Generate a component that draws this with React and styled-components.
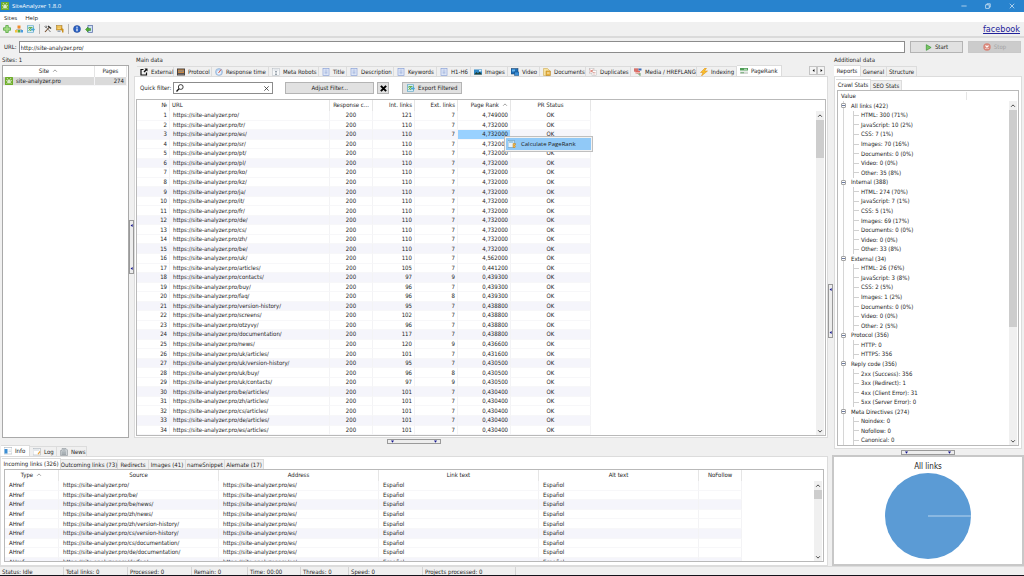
import React from "react";
import styled, { createGlobalStyle, css } from "styled-components";

const Global = createGlobalStyle`
  * { box-sizing: border-box; }
  html, body { margin: 0; }
  body, button, input {
    font: 6px/8px "DejaVu Sans Condensed", "DejaVu Sans", Tahoma, sans-serif;
    color: #1c1c1c;
  }
  button { padding: 0; margin: 0; border: 0; background: none; white-space: nowrap; }
  svg { display: block; flex: none; }
`;

/* ---------- icons ---------- */

const art = {
  logo: (
    <>
      <rect width="16" height="16" rx="1" fill="#6fae2b" />
      <path d="M4 2l2 3M12 2l-2 3M2 7l3 1M14 7l-3 1M3 13l3-2M13 13l-3-2" stroke="#fff" strokeWidth="1.3" />
      <ellipse cx="8" cy="9" rx="3" ry="4" fill="#fff" />
      <path d="M8 5v8" stroke="#6fae2b" />
    </>
  ),
  plus: <path d="M5.5 1h5v4.500h4.500v5h-4.500v4.500h-5v-4.500h-4.500v-5h4.500z" fill="#a6dc86" stroke="#4fa43a" strokeWidth="1.500" />,
  blocks: (
    <>
      <path d="M8 6v3M3 11V9h10v2" stroke="#888" fill="none" />
      <rect x="5" y="1" width="6" height="6" fill="#f08a2a" />
      <rect x="0" y="10" width="5" height="5" fill="#f5c13c" />
      <rect x="5.500" y="10" width="5" height="5" fill="#5aaf3e" />
      <rect x="11" y="10" width="5" height="5" fill="#4c9be0" />
    </>
  ),
  exportSheet: (
    <>
      <rect x="1" y="1.500" width="12" height="13" fill="#e8f5fb" stroke="#5ba7c9" strokeWidth="1.500" />
      <path d="M3 5h8M3 12l5-6M3 6l5 6" stroke="#57a83c" strokeWidth="1.800" />
      <path d="M8 7h4V5l4 4-4 4v-2H8z" fill="#4aa6cf" />
    </>
  ),
  tools: (
    <>
      <path d="M2 14L11 4" stroke="#7a4f2c" strokeWidth="2.200" />
      <path d="M8 2l6 5" stroke="#333" strokeWidth="3" />
      <path d="M3 3l10 11" stroke="#777" strokeWidth="2" />
      <path d="M1 3l2 2 2-2-1-2" stroke="#555" fill="none" strokeWidth="1.500" />
    </>
  ),
  serverKey: (
    <>
      <rect x="1" y="1" width="11" height="9" fill="#e9b33b" stroke="#9a7224" />
      <path d="M3 4h7M3 7h7" stroke="#fff2c0" />
      <path d="M8 9l3-3 4 2v7h-3v-4z" fill="#c98f1d" />
      <rect x="3" y="11" width="6" height="3" fill="#9aa6b5" />
    </>
  ),
  info: (
    <>
      <circle cx="8" cy="8" r="7" fill="#2b62c4" stroke="#183f8a" />
      <circle cx="8" cy="4.500" r="1.400" fill="#fff" />
      <rect x="6.800" y="7" width="2.400" height="5.500" fill="#fff" />
    </>
  ),
  exit: (
    <>
      <rect x="6" y="1" width="9" height="14" fill="#cfe0f5" stroke="#5b6fa8" strokeWidth="1.500" />
      <path d="M1 9l5-5v3h5v4H6v3z" fill="#4fae35" stroke="#2f7d1c" />
    </>
  ),
  play: <path d="M3 1.500L14 8 3 14.500z" fill="#7cc462" stroke="#2f9430" strokeWidth="1.500" />,
  stop: (
    <>
      <circle cx="8" cy="8" r="7.500" fill="#d9877a" />
      <path d="M5 5l6 6M11 5l-6 6" stroke="#fff" strokeWidth="2.200" />
    </>
  ),
  external: (
    <>
      <path d="M7 3H2v11h11V9" fill="none" stroke="#111" strokeWidth="2.400" />
      <path d="M9 1h6v6l-2-2-4 4-2-2 4-4z" fill="#111" />
    </>
  ),
  protocol: (
    <>
      <rect x="0" y="1" width="16" height="14" fill="#4b433f" />
      <rect x="2" y="3" width="12" height="7" fill="#c98944" />
      <path d="M3 8l3-3 3 3 4-4" stroke="#5b83b8" strokeWidth="1.500" fill="none" />
      <path d="M2 12.500h12" stroke="#8f9399" strokeWidth="1.500" />
    </>
  ),
  gauge: (
    <>
      <circle cx="8" cy="8" r="7" fill="#b9d4f2" stroke="#7f9fc6" />
      <circle cx="8" cy="9" r="4" fill="#eef5fc" />
      <path d="M7 10l5-7" stroke="#d24a3c" strokeWidth="1.800" />
    </>
  ),
  robots: (
    <>
      <rect x="1" y="1" width="14" height="14" fill="#f6f8fa" stroke="#b3bac2" />
      <path d="M3 4h10" stroke="#b3bac2" />
      <path d="M6 7h4M8 7v6M6 13h4" stroke="#73808c" strokeWidth="1.300" />
    </>
  ),
  page: (
    <>
      <rect x="2" y="1" width="12" height="14" fill="#e6edfb" stroke="#8aa2d6" strokeWidth="1.400" />
      <path d="M5 4h6M5 6.500h6M5 9h6M5 11.500h6" stroke="#7f97cd" />
    </>
  ),
  images: (
    <>
      <rect x="0" y="3" width="16" height="10" fill="#2f86c4" />
      <path d="M0 13l5-5 3 3 3-4 5 6z" fill="#1f3f33" />
      <rect x="10" y="4" width="5" height="3" fill="#d8eefb" />
    </>
  ),
  video: (
    <>
      <rect x="0" y="1" width="14" height="11" fill="#1e6fb9" stroke="#173d63" />
      <path d="M2 3h6v4H2z" fill="#69b4ea" />
      <rect x="7" y="8" width="9" height="7" fill="#3d8fd6" stroke="#164a7c" />
    </>
  ),
  docs: (
    <>
      <path d="M1 1h8l4 4v10H1z" fill="#f7e3a1" stroke="#c79c3a" />
      <path d="M6 6h9v9H6z" fill="#e9b23c" stroke="#b0802a" />
      <path d="M8 10h5" stroke="#fff" strokeWidth="1.500" />
    </>
  ),
  duplicates: (
    <>
      <rect x="1" y="1" width="9" height="10" fill="#fff" stroke="#b7b7b7" />
      <rect x="6" y="5" width="9" height="10" fill="#fff" stroke="#b7b7b7" />
      <path d="M2 3l6 6M8 3L2 9" stroke="#d9503f" strokeWidth="1.500" />
      <path d="M8 9h5M8 12h5" stroke="#c07a70" />
    </>
  ),
  media: (
    <>
      <rect x="0" y="1" width="9" height="6" fill="#c8443c" />
      <rect x="9" y="1" width="6" height="4" fill="#3d6bb3" />
      <rect x="3" y="6" width="9" height="5" fill="#e0685e" />
      <path d="M0 4h9M3 9h9" stroke="#fff" />
      <path d="M8 11l4 4M12 10v5" stroke="#3d8a48" strokeWidth="1.500" />
    </>
  ),
  bolt: <path d="M10 0L1 9h5l-3 7L15 6H9l4-6z" fill="#fbc02d" stroke="#d98a12" />,
  rank: (
    <>
      <rect x="0" y="2" width="16" height="5" fill="#4f9d57" />
      <path d="M8 4.500h6" stroke="#e8f6e8" strokeWidth="1.500" />
      <rect x="0" y="9" width="16" height="5" fill="#d4d9d4" />
      <path d="M1 11.500h7" stroke="#4f9d57" strokeWidth="1.500" />
    </>
  ),
  search: (
    <>
      <circle cx="9.500" cy="6" r="4.800" fill="none" stroke="#111" strokeWidth="1.600" />
      <path d="M6 9.500L1 15" stroke="#111" strokeWidth="2.400" />
    </>
  ),
  close: <path d="M3 3l10 10M13 3L3 13" stroke="#333" strokeWidth="1.800" />,
  closeBold: <path d="M2 2l12 12M14 2L2 14" stroke="#000" strokeWidth="4.500" />,
  sort: <path d="M3 10l5-5 5 5" fill="none" stroke="#555" strokeWidth="1.500" />,
  up: <path d="M3 10l5-5 5 5" fill="none" stroke="#444" strokeWidth="2.600" />,
  down: <path d="M3 6l5 5 5-5" fill="none" stroke="#444" strokeWidth="2.600" />,
  left: <path d="M11 3L5 8l6 5z" fill="#111" />,
  right: <path d="M5 3l6 5-6 5z" fill="#111" />,
  gripDown: <path d="M0 3h16L8 14z" fill="#14148c" />,
  gripLeft: <path d="M14 0v16L3 8z" fill="#14148c" />,
  infoTab: (
    <>
      <rect x="0" y="1" width="16" height="13" fill="#fff" stroke="#9aa4ae" />
      <rect x="1" y="4" width="6" height="9" fill="#3b8ed4" />
      <path d="M9 6h5M9 9h5" stroke="#b9c6d2" />
    </>
  ),
  logTab: (
    <>
      <rect x="0" y="1" width="15" height="13" fill="#fff" stroke="#9aa4ae" />
      <path d="M2 4h11" stroke="#b8c3cc" strokeWidth="1.500" />
      <path d="M9 12l4-6 2 2-4 5z" fill="#e9a23b" />
    </>
  ),
  newsTab: (
    <>
      <path d="M4 1h8l3 3v11H1V5h3z" fill="#cfd4d8" stroke="#7e868d" />
      <path d="M3 8h9M3 10.500h9M3 13h9M6 4h5" stroke="#7e868d" strokeWidth="1.200" />
    </>
  ),
  calc: (
    <>
      <rect x="0" y="1" width="13" height="14" fill="#eaf4fb" stroke="#6d9fc0" strokeWidth="1.300" />
      <path d="M2 4h9" stroke="#5aa3d0" strokeWidth="2" />
      <path d="M10 7h5v3l-2 1 2 2-1 2h-4z" fill="#f0b64c" stroke="#bd8426" />
    </>
  ),
  min: <path d="M1 8h14" stroke="#fff" strokeWidth="1.600" />,
  restore: (
    <>
      <rect x="2" y="5" width="9" height="9" fill="none" stroke="#fff" strokeWidth="1.600" />
      <path d="M5 5V2h9v9h-3" fill="none" stroke="#fff" strokeWidth="1.600" />
    </>
  ),
  shut: <path d="M2 2l12 12M14 2L2 14" stroke="#fff" strokeWidth="1.600" />,
};

const Icon = ({ name, size = 8 }) => (
  <svg width={size} height={size} viewBox="0 0 16 16" fill="none" aria-hidden="true">{art[name]}</svg>
);

/* ---------- window frame ---------- */

const Window = styled.div`
  min-height: 100vh;
  display: flex;
  flex-direction: column;
  background: #f0f0f0;
  border-bottom: 1px solid #14121a;
  overflow: hidden;
`;

const TitleBar = styled.header`
  display: flex;
  align-items: center;
  gap: 3px;
  height: 12px;
  padding-left: 1px;
  background: #2883ce;
  color: #fff;
  font-family: "Open Sans", sans-serif;
`;

const Title = styled.span`
  flex: 1;
`;

const WindowButtonGroup = styled.div`
  display: flex;
`;

const WindowButton = styled.button`
  width: 24px;
  height: 12px;
  display: grid;
  place-items: center;
`;

const MenuBar = styled.nav`
  display: flex;
  align-items: flex-end;
  gap: 8px;
  height: 10px;
  padding: 0 4px;
  background: #fff;
  button { font: 6px/8px "Open Sans", sans-serif; }
`;

const ToolBar = styled.div`
  display: flex;
  align-items: center;
  gap: 4px;
  height: 16px;
  padding: 0 4px 0 3px;
  border-bottom: 2px solid #dadada;
`;

const Divider = styled.i`
  width: 1px;
  height: 10px;
  background: #b5b5b5;
`;

const FbLink = styled.a`
  margin-left: auto;
  font-size: 9px;
  line-height: 12px;
  color: #22229a;
`;

const UrlBar = styled.form`
  display: flex;
  align-items: center;
  gap: 5px;
  height: 17px;
  padding: 1px 3px 0 4px;
`;

const UrlField = styled.label`
  flex: 1;
  display: flex;
  align-items: center;
  gap: 2px;
`;

const TextInput = styled.input`
  flex: 1;
  min-width: 0;
  height: 12px;
  padding: 0 1px;
  border: 1px solid #8c8c8c;
  background: #fff;
  outline: 0;
`;

const PushButton = styled.button`
  display: flex;
  align-items: center;
  justify-content: center;
  gap: 3px;
  width: ${(p) => p.$w}px;
  height: 12px;
  border: 1px solid ${(p) => (p.disabled ? "#c9c9c9" : "#b4b4b4")};
  background: ${(p) => (p.disabled ? "#cccccc" : "#e1e1e1")};
  color: ${(p) => (p.disabled ? "#a3a3a3" : "#1c1c1c")};
`;

/* ---------- panes ---------- */

const Workspace = styled.main`
  flex: 1;
  display: flex;
`;

const Column = styled.div`
  display: flex;
  flex-direction: column;
  min-width: 0;
  ${(p) => (p.$w ? `width: ${p.$w}px; flex: none;` : "flex: 1;")}
`;

const TopPanes = styled.div`
  flex: 1;
  display: flex;
`;

const PaneLabel = styled.div`
  height: 10px;
  padding: 1px 2px 0;
`;

const SitesBox = styled.div`
  flex: 1;
  margin-left: 2px;
  border: 1px solid #a9a9a9;
  background: #fff;
`;

const VSplit = styled.div`
  width: ${(p) => p.$w}px;
  flex: none;
  display: flex;
  align-items: center;
  justify-content: center;
`;

const HSplit = styled.div`
  height: ${(p) => p.$h}px;
  flex: none;
  display: flex;
  align-items: center;
  justify-content: center;
`;

const Grip = styled.div`
  flex: none;
  display: flex;
  align-items: center;
  justify-content: space-between;
  border: 1px solid #9a9a9a;
  background: #ededed;
  ${(p) =>
    p.$vertical
      ? css`flex-direction: column; width: 5px; height: 54px; padding: 3px 0;`
      : css`width: 54px; height: 5px; padding: 0 3px;`}
`;

const VGrip = () => (
  <Grip $vertical><Icon name="gripLeft" size={3} /><Icon name="gripLeft" size={3} /></Grip>
);
const HGrip = () => (
  <Grip><Icon name="gripDown" size={3} /><Icon name="gripDown" size={3} /></Grip>
);

const TabStrip = styled.div`
  display: flex;
  align-items: flex-end;
  height: ${(p) => p.$h || 11}px;
  padding: 0 ${(p) => p.$pad || 0}px;
`;

const TabButton = styled.button`
  display: flex;
  align-items: center;
  gap: 3px;
  flex: none;
  height: 10px;
  width: ${(p) => p.$w}px;
  padding: 0 3px;
  border: 1px solid #dcdcdc;
  border-width: 1px 1px 0 0;
  background: #f0f0f0;
  ${(p) => !p.$icon && css`justify-content: center; padding: 0;`}
  ${(p) =>
    p.$active &&
    css`
      height: 11px;
      padding-bottom: 1px;
      background: #fff;
    `}
`;

const Tab = ({ icon, w, active, children }) => (
  <TabButton type="button" role="tab" aria-selected={!!active} $w={w} $icon={!!icon} $active={active}>
    {icon && <Icon name={icon} />}
    {children}
  </TabButton>
);

const TabPager = styled.div`
  display: flex;
  margin-left: auto;
  margin-bottom: 1px;
  button {
    width: 8px;
    height: 9px;
    display: grid;
    place-items: center;
    border: 1px solid #c4c4c4;
    background: #f4f4f4;
  }
`;

const Page = styled.section`
  flex: ${(p) => (p.$fixed ? "none" : 1)};
  display: flex;
  flex-direction: column;
  margin: 0 ${(p) => p.$inset || 0}px;
  padding: 0 1px ${(p) => p.$bottom || 1}px;
  border: 1px solid #dcdcdc;
  background: #fff;
`;

const FilterBar = styled.div`
  display: flex;
  align-items: center;
  height: 22px;
  padding: 0 4px;
`;

const Gap = styled.span`
  width: ${(p) => p.$w}px;
`;

const SearchBox = styled.label`
  display: flex;
  align-items: center;
  width: 100px;
  height: 12px;
  padding: 0 2px;
  border: 1px solid #8c8c8c;
  background: #fff;
  input { flex: 1; min-width: 0; height: 8px; padding: 0; border: 0; outline: 0; }
`;

/* ---------- data grids ---------- */

const GridFrame = styled.div`
  flex: ${(p) => (p.$h ? "none" : 1)};
  height: ${(p) => (p.$h ? p.$h + "px" : "auto")};
  margin: 0 ${(p) => p.$inset || 0}px;
  position: relative;
  display: flex;
  border: 1px solid #b9b9b9;
  background: #fff;
`;

const DataTable = styled.table`
  flex: 1;
  min-width: 0;
  display: flex;
  flex-direction: column;
  thead { display: block; }
  tbody {
    flex: 1;
    min-height: 0;
    display: flex;
    flex-direction: column;
    overflow: hidden;
  }
`;

const Row = styled.tr`
  flex: ${(p) => p.$basis || "1 0 9px"};
  display: grid;
  grid-template-columns: ${(p) => p.$cols};
  width: max-content;
  background: ${(p) => (p.$tint ? "#f5f5fb" : "#fff")};
`;

const SiteRow = styled(Row)`
  flex: 0 0 9px;
  background: #dadada;
`;

const Cell = styled.td`
  display: flex;
  align-items: center;
  justify-content: ${(p) => p.$align || "flex-start"};
  gap: 3px;
  padding: 0 ${(p) => p.$pad || 3}px;
  line-height: 8px;
  border-right: 1px solid #f3f3f5;
  border-bottom: 1px solid #f7f7f9;
  white-space: nowrap;
  background: ${(p) => (p.$selected ? "#99d1ff" : "transparent")};
`;

const HeadCell = styled.th`
  display: flex;
  align-items: center;
  justify-content: ${(p) => p.$align || "center"};
  gap: 3px;
  height: 11px;
  padding: 0 2px 1px;
  font-weight: 400;
  border-right: 1px solid #e5e5e5;
  white-space: nowrap;
`;

const ScrollTrack = styled.div`
  width: 8px;
  flex: none;
  display: flex;
  flex-direction: column;
  justify-content: space-between;
  margin: ${(p) => p.$top}px 1px 0 0;
  background: #f0f0f0;
`;

const ScrollRun = styled.div`
  flex: 1;
`;

const ScrollButton = styled.button`
  height: 9px;
  flex: none;
  display: grid;
  place-items: center;
`;

const Thumb = styled.div`
  height: ${(p) => p.$size}px;
  background: #cdcdcd;
`;

const Scroll = ({ top, size }) => (
  <ScrollTrack $top={top}>
    <ScrollButton type="button" aria-label="Scroll up"><Icon name="up" size={6} /></ScrollButton>
    <ScrollRun><Thumb $size={size} /></ScrollRun>
    <ScrollButton type="button" aria-label="Scroll down"><Icon name="down" size={6} /></ScrollButton>
  </ScrollTrack>
);

/* ---------- context menu ---------- */

const ContextMenu = styled.div`
  position: absolute;
  top: 36px;
  left: 367px;
  width: 89px;
  padding: 1px;
  border: 1px solid #bfbfbf;
  background: #f2f2f2;
  button {
    display: flex;
    align-items: center;
    gap: 5px;
    width: 100%;
    height: 12px;
    padding: 0 2px;
    background: #91c9f7;
    font-family: "Open Sans", sans-serif;
  }
`;

/* ---------- report tree ---------- */

const TreeBody = styled.div`
  flex: 1;
  display: flex;
  flex-direction: column;
`;

const TreeHead = styled.div`
  display: flex;
  height: 10px;
  padding-left: 3px;
  align-items: center;
  span {
    width: 126px;
    border-right: 1px solid #e5e5e5;
  }
`;

const TreeList = styled.ul`
  flex: 1;
  display: flex;
  flex-direction: column;
  margin: 0 0 0 5px;
  padding: 0;
  list-style: none;
  border-left: 1px solid #d6d6d6;
`;

const GroupItem = styled.li`
  flex: 1 0 9px;
  display: flex;
  align-items: center;
  gap: 5px;
  margin-left: -3px;
  line-height: 8px;
`;

const Minus = styled.i`
  width: 5px;
  height: 5px;
  display: grid;
  place-items: center;
  border: 1px solid #a5a5a5;
  border-radius: 1px;
  background: #fff;
  &::after { content: ""; width: 3px; height: 1px; background: #6a7aa0; }
`;

const LeafItem = styled.li`
  flex: 1 0 9px;
  display: flex;
  align-items: center;
  gap: 2px;
  margin-left: 9px;
  border-left: 1px solid #d0d0d0;
  line-height: 8px;
  &::before { content: ""; width: 5px; height: 1px; background: #d0d0d0; }
`;

/* ---------- chart and status ---------- */

const ChartBox = styled.figure`
  height: 111px;
  flex: none;
  margin: 0;
  display: flex;
  flex-direction: column;
  align-items: center;
  padding-top: 5px;
  border: 2px solid #c8c8c8;
  background: #fff;
  figcaption { font-size: 8px; line-height: 10px; }
`;

const StatusBar = styled.footer`
  height: 9px;
  display: flex;
  border-top: 1px solid #dcdcdc;
`;

const StatusItem = styled.span`
  width: ${(p) => p.$w}px;
  padding: 1px 0 0 2px;
  border-right: 1px solid #d4d4d4;
  line-height: 8px;
  white-space: nowrap;
`;

/* ---------- data ---------- */

const mainTabs = [
  ["external", "External", 37], ["protocol", "Protocol", 38], ["gauge", "Response time", 57],
  ["robots", "Meta Robots", 50], ["page", "Title", 28], ["page", "Description", 47],
  ["page", "Keywords", 43], ["page", "H1-H6", 34], ["images", "Images", 37], ["video", "Video", 32],
  ["docs", "Documents", 46], ["duplicates", "Duplicates", 45], ["media", "Media / HREFLANG", 66],
  ["bolt", "Indexing", 40], ["rank", "PageRank", 45],
];

const linkTabs = [
  ["Incoming links (326)", 59], ["Outcoming links (73)", 57], ["Redirects", 31],
  ["Images (41)", 37], ["nameSnippet", 39], ["Alernate (17)", 39],
];

const base = "https://site-analyzer.pro/";
const pages = [
  ["", 121, 7, "4,749000"], ["tr/", 110, 7, "4,732000"], ["es/", 110, 7, "4,732000"],
  ["sr/", 110, 7, "4,732000"], ["pt/", 110, 7, "4,732000"], ["pl/", 110, 7, "4,732000"],
  ["ko/", 110, 7, "4,732000"], ["kz/", 110, 7, "4,732000"], ["ja/", 110, 7, "4,732000"],
  ["it/", 110, 7, "4,732000"], ["fr/", 110, 7, "4,732000"], ["de/", 110, 7, "4,732000"],
  ["cs/", 110, 7, "4,732000"], ["zh/", 110, 7, "4,732000"], ["be/", 110, 7, "4,732000"],
  ["uk/", 110, 7, "4,562000"], ["articles/", 105, 7, "0,441200"], ["contacts/", 97, 9, "0,439300"],
  ["buy/", 96, 7, "0,439300"], ["faq/", 96, 8, "0,439300"], ["version-history/", 95, 7, "0,438800"],
  ["screens/", 102, 7, "0,438800"], ["otzyvy/", 96, 7, "0,438800"], ["documentation/", 117, 7, "0,438800"],
  ["news/", 120, 9, "0,436600"], ["uk/articles/", 101, 7, "0,431600"], ["uk/version-history/", 95, 7, "0,430500"],
  ["uk/buy/", 96, 8, "0,430500"], ["uk/contacts/", 97, 9, "0,430500"], ["be/articles/", 101, 7, "0,430400"],
  ["zh/articles/", 101, 7, "0,430400"], ["cs/articles/", 101, 7, "0,430400"],
  ["de/articles/", 101, 7, "0,430400"], ["es/articles/", 101, 7, "0,430400"],
];

const sources = ["", "be/", "be/news/", "zh/news/", "zh/version-history/", "cs/version-history/",
  "cs/documentation/", "de/documentation/", "de/faq/"];

const report = [
  ["All links (422)", ["HTML: 300 (71%)", "JavaScript: 10 (2%)", "CSS: 7 (1%)", "Images: 70 (16%)", "Documents: 0 (0%)", "Video: 0 (0%)", "Other: 35 (8%)"]],
  ["Internal (388)", ["HTML: 274 (70%)", "JavaScript: 7 (1%)", "CSS: 5 (1%)", "Images: 69 (17%)", "Documents: 0 (0%)", "Video: 0 (0%)", "Other: 33 (8%)"]],
  ["External (34)", ["HTML: 26 (76%)", "JavaScript: 3 (8%)", "CSS: 2 (5%)", "Images: 1 (2%)", "Documents: 0 (0%)", "Video: 0 (0%)", "Other: 2 (5%)"]],
  ["Protocol (356)", ["HTTP: 0", "HTTPS: 356"]],
  ["Reply code (356)", ["2xx (Success): 356", "3xx (Redirect): 1", "4xx (Client Error): 31", "5xx (Server Error): 0"]],
  ["Meta Directives (274)", ["Noindex: 0", "Nofollow: 0", "Canonical: 0"]],
];

const statusItems = [
  ["Status: Idle", 64], ["Total links: 0", 64], ["Processed: 0", 64], ["Remain: 0", 56],
  ["Time: 00:00", 53], ["Threads: 0", 48], ["Speed: 0", 74], ["Projects processed: 0", 93],
];

const siteCols = "92px 32px";
const mainCols = "33px 160px 43px 42px 43px 53px 80px";
const linkCols = "54px 160px 160px 160px 160px 43px";

/* ---------- sections ---------- */

const SitesGrid = () => (
  <SitesBox>
    <DataTable>
      <thead>
        <Row $cols={siteCols}>
          <HeadCell>Site <Icon name="sort" size={6} /></HeadCell>
          <HeadCell>Pages</HeadCell>
        </Row>
      </thead>
      <tbody>
        <SiteRow $cols={siteCols}>
          <Cell $pad={2}><Icon name="logo" />site-analyzer.pro</Cell>
          <Cell $align="flex-end" $pad={2}>274</Cell>
        </SiteRow>
      </tbody>
    </DataTable>
  </SitesBox>
);

const MainGrid = () => (
  <GridFrame>
    <DataTable>
      <thead>
        <Row $cols={mainCols}>
          <HeadCell $align="flex-end">№</HeadCell>
          <HeadCell $align="flex-start">URL</HeadCell>
          <HeadCell>Response c...</HeadCell>
          <HeadCell $align="flex-end">Int. links</HeadCell>
          <HeadCell $align="flex-end">Ext. links</HeadCell>
          <HeadCell $align="flex-end">Page Rank <Icon name="sort" size={6} /></HeadCell>
          <HeadCell>PR Status</HeadCell>
        </Row>
      </thead>
      <tbody>
        {pages.map(([path, int, ext, rank], i) => (
          <Row key={path} $cols={mainCols} $tint={i % 3 === 2}>
            <Cell $align="flex-end" $pad={2}>{i + 1}</Cell>
            <Cell>{base + path}</Cell>
            <Cell $align="center">200</Cell>
            <Cell $align="flex-end" $pad={2}>{int}</Cell>
            <Cell $align="flex-end" $pad={2}>{ext}</Cell>
            <Cell $align="flex-end" $pad={2} $selected={i === 2}>{rank}</Cell>
            <Cell $align="center">OK</Cell>
          </Row>
        ))}
      </tbody>
    </DataTable>
    <Scroll top={11} size={38} />
    <ContextMenu role="menu">
      <button type="button" role="menuitem"><Icon name="calc" />Calculate PageRank</button>
    </ContextMenu>
  </GridFrame>
);

const LinksGrid = () => (
  <GridFrame $h={93} $inset={2}>
    <DataTable>
      <thead>
        <Row $cols={linkCols}>
          <HeadCell>Type <Icon name="sort" size={6} /></HeadCell>
          <HeadCell>Source</HeadCell>
          <HeadCell>Address</HeadCell>
          <HeadCell>Link text</HeadCell>
          <HeadCell>Alt text</HeadCell>
          <HeadCell>NoFollow</HeadCell>
        </Row>
      </thead>
      <tbody>
        {sources.map((path, i) => (
          <Row key={path} $cols={linkCols} $basis="0 0 12%" $tint={i % 3 === 2}>
            <Cell $pad={4}>AHref</Cell>
            <Cell $pad={4}>{base + path}</Cell>
            <Cell $pad={4}>{base}es/</Cell>
            <Cell $pad={4}>Español</Cell>
            <Cell $pad={4}>Español</Cell>
            <Cell />
          </Row>
        ))}
      </tbody>
    </DataTable>
    <Scroll top={11} size={9} />
  </GridFrame>
);

const ReportTree = () => (
  <GridFrame $inset={1}>
    <TreeBody>
      <TreeHead><span>Value</span></TreeHead>
      <TreeList>
        {report.map(([group, leaves]) => (
          <React.Fragment key={group}>
            <GroupItem><Minus />{group}</GroupItem>
            {leaves.map((leaf) => <LeafItem key={leaf}>{leaf}</LeafItem>)}
          </React.Fragment>
        ))}
      </TreeList>
    </TreeBody>
    <Scroll top={10} size={217} />
  </GridFrame>
);

export default function App() {
  return (
    <Window>
      <Global />
      <TitleBar>
        <Icon name="logo" />
        <Title>SiteAnalyzer 1.8.0</Title>
        <WindowButtonGroup>
          <WindowButton type="button" aria-label="Minimize"><Icon name="min" size={6} /></WindowButton>
          <WindowButton type="button" aria-label="Restore"><Icon name="restore" size={6} /></WindowButton>
          <WindowButton type="button" aria-label="Close"><Icon name="shut" size={6} /></WindowButton>
        </WindowButtonGroup>
      </TitleBar>
      <MenuBar>
        <button type="button">Sites</button>
        <button type="button">Help</button>
      </MenuBar>
      <ToolBar>
        <Icon name="plus" /><Icon name="blocks" /><Icon name="exportSheet" />
        <Divider />
        <Icon name="tools" /><Icon name="serverKey" />
        <Divider />
        <Icon name="info" /><Icon name="exit" />
        <FbLink href="#facebook">facebook</FbLink>
      </ToolBar>
      <UrlBar>
        <UrlField>URL: <TextInput defaultValue="http://site-analyzer.pro/" /></UrlField>
        <PushButton type="button" $w={53}><Icon name="play" size={7} />Start</PushButton>
        <PushButton type="button" $w={53} disabled><Icon name="stop" />Stop</PushButton>
      </UrlBar>
      <Workspace>
        <Column>
          <TopPanes>
            <Column $w={129}>
              <PaneLabel>Sites: 1</PaneLabel>
              <SitesGrid />
            </Column>
            <VSplit $w={5}><VGrip /></VSplit>
            <Column>
              <PaneLabel>Main data</PaneLabel>
              <TabStrip role="tablist" $pad={3}>
                {mainTabs.map(([icon, label, w]) => (
                  <Tab key={label} icon={icon} w={w} active={label === "PageRank"}>{label}</Tab>
                ))}
                <TabPager>
                  <button type="button" aria-label="Previous tabs"><Icon name="left" size={5} /></button>
                  <button type="button" aria-label="Next tabs"><Icon name="right" size={5} /></button>
                </TabPager>
              </TabStrip>
              <Page>
                <FilterBar>
                  <label htmlFor="quick">Quick filter:</label>
                  <Gap $w={2} />
                  <SearchBox>
                    <Icon name="search" />
                    <input id="quick" type="text" />
                    <Icon name="close" size={7} />
                  </SearchBox>
                  <Gap $w={12} />
                  <PushButton type="button" $w={89}>Adjust Filter...</PushButton>
                  <Gap $w={3} />
                  <PushButton type="button" $w={12} aria-label="Clear filter"><Icon name="closeBold" size={7} /></PushButton>
                  <Gap $w={13} />
                  <PushButton type="button" $w={60}><Icon name="exportSheet" />Export Filtered</PushButton>
                </FilterBar>
                <MainGrid />
              </Page>
            </Column>
          </TopPanes>
          <HSplit $h={7}><HGrip /></HSplit>
          <TabStrip role="tablist" $pad={1}>
            <Tab icon="infoTab" w={29} active>Info</Tab>
            <Tab icon="logTab" w={27}>Log</Tab>
            <Tab icon="newsTab" w={30}>News</Tab>
          </TabStrip>
          <Page $fixed $bottom={3}>
            <TabStrip role="tablist" $h={12}>
              {linkTabs.map(([label, w], i) => (
                <Tab key={label} w={w} active={i === 0}>{label}</Tab>
              ))}
            </TabStrip>
            <LinksGrid />
          </Page>
        </Column>
        <VSplit $w={4}><VGrip /></VSplit>
        <Column $w={192}>
          <PaneLabel>Additional data</PaneLabel>
          <TabStrip role="tablist" $pad={2}>
            <Tab w={27} active>Reports</Tab>
            <Tab w={26}>General</Tab>
            <Tab w={30}>Structure</Tab>
          </TabStrip>
          <Page $inset={2} $bottom={2}>
            <TabStrip role="tablist" $h={13}>
              <Tab w={35} active>Crawl Stats</Tab>
              <Tab w={31}>SEO Stats</Tab>
            </TabStrip>
            <ReportTree />
          </Page>
          <HSplit $h={6}><HGrip /></HSplit>
          <ChartBox>
            <figcaption>All links</figcaption>
            <svg width="88" height="88" viewBox="0 0 88 88" role="img" aria-label="All links">
              <circle cx="44" cy="44" r="43" fill="#5b9bd5" />
              <path d="M44 44h43" stroke="#b9d5ee" />
            </svg>
          </ChartBox>
        </Column>
      </Workspace>
      <StatusBar>
        {statusItems.map(([label, w]) => <StatusItem key={label} $w={w}>{label}</StatusItem>)}
      </StatusBar>
    </Window>
  );
}
